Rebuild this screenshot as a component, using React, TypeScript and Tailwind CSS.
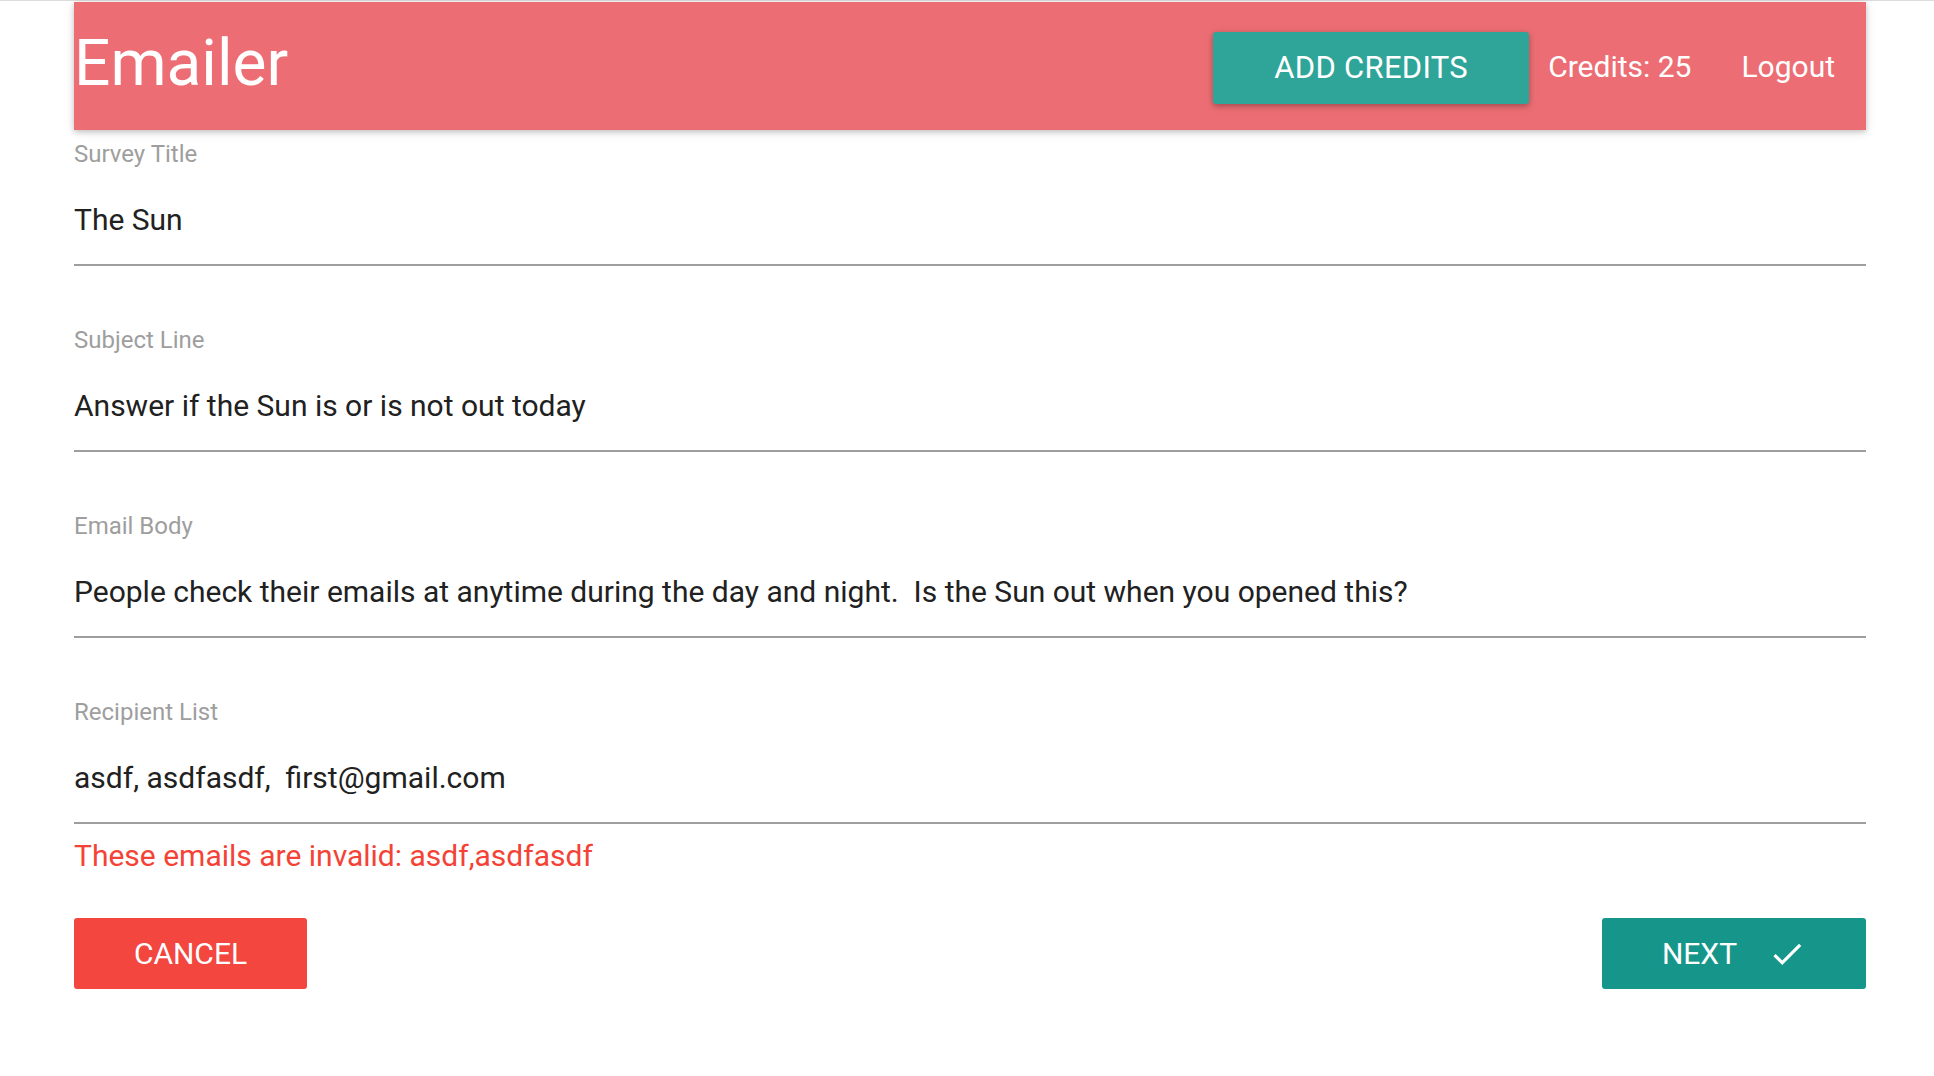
const fields = [
  { label: "Survey Title", value: "The Sun" },
  { label: "Subject Line", value: "Answer if the Sun is or is not out today" },
  {
    label: "Email Body",
    value: "People check their emails at anytime during the day and night.\u00a0 Is the Sun out when you opened this?",
  },
  { label: "Recipient List", value: "asdf, asdfasdf,\u00a0 first@gmail.com" },
];

function Header() {
  return (
    <nav className="flex h-[128px] items-center bg-[#ec6e74] text-white shadow-[0_2px_5px_0_rgba(0,0,0,0.16),0_2px_10px_0_rgba(0,0,0,0.12)]">
      <a className="-mt-[4px] text-[64px] leading-none">Emailer</a>
      <div className="ml-auto flex h-full items-start">
        <button className="mt-[30px] flex h-[72px] w-[316px] items-center justify-center rounded-[3px] bg-[#2fa599] text-[31px] tracking-[0.3px] text-white shadow-[0_2px_5px_0_rgba(0,0,0,0.2),0_2px_10px_0_rgba(0,0,0,0.14)]">
          ADD CREDITS
        </button>
        <div className="ml-[19px] flex h-full items-center text-[30px]">Credits: 25</div>
        <a className="ml-[50px] mr-[31px] flex h-full items-center text-[30px]">Logout</a>
      </div>
    </nav>
  );
}

function Field({ label, value, last }: { label: string; value: string; last: boolean }) {
  return (
    <div className={last ? "" : "mb-[59px]"}>
      <label className="block h-[30px] text-[24px] leading-[30px] text-[#9e9e9e]">{label}</label>
      <div className="mt-[31px] border-b-2 border-[#9e9e9e] pb-[24px]">
        <div className="h-[40px] text-[30px] leading-[40px] text-[#212121]">{value}</div>
      </div>
    </div>
  );
}

export default function App() {
  return (
    <div className="min-h-screen bg-white font-['Roboto',sans-serif]">
      <div className="h-[2px] border-t border-[#dcdcdc]" />
      <div className="ml-[74px] w-[1792px]">
        <Header />
        <form className="pt-[9px]" onSubmit={(e) => e.preventDefault()}>
          {fields.map((f, i) => (
            <Field key={f.label} label={f.label} value={f.value} last={i === fields.length - 1} />
          ))}
          <div className="mt-[12px] h-[40px] text-[30px] leading-[40px] text-[#f44336]">
            These emails are invalid: asdf,asdfasdf
          </div>
          <div className="mt-[42px] flex justify-between">
            <button className="flex h-[71px] w-[233px] items-center justify-center rounded-[3px] bg-[#f3463f] text-[30px] text-white">
              CANCEL
            </button>
            <button className="flex h-[71px] w-[264px] items-center justify-center gap-[31px] rounded-[3px] bg-[#16968a] text-[30px] text-white">
              NEXT
              <svg viewBox="0 0 24 24" className="h-[38px] w-[38px] fill-white">
                <path d="M9 16.17L4.83 12l-1.42 1.41L9 19 21 7l-1.41-1.41z" />
              </svg>
            </button>
          </div>
        </form>
      </div>
    </div>
  );
}
